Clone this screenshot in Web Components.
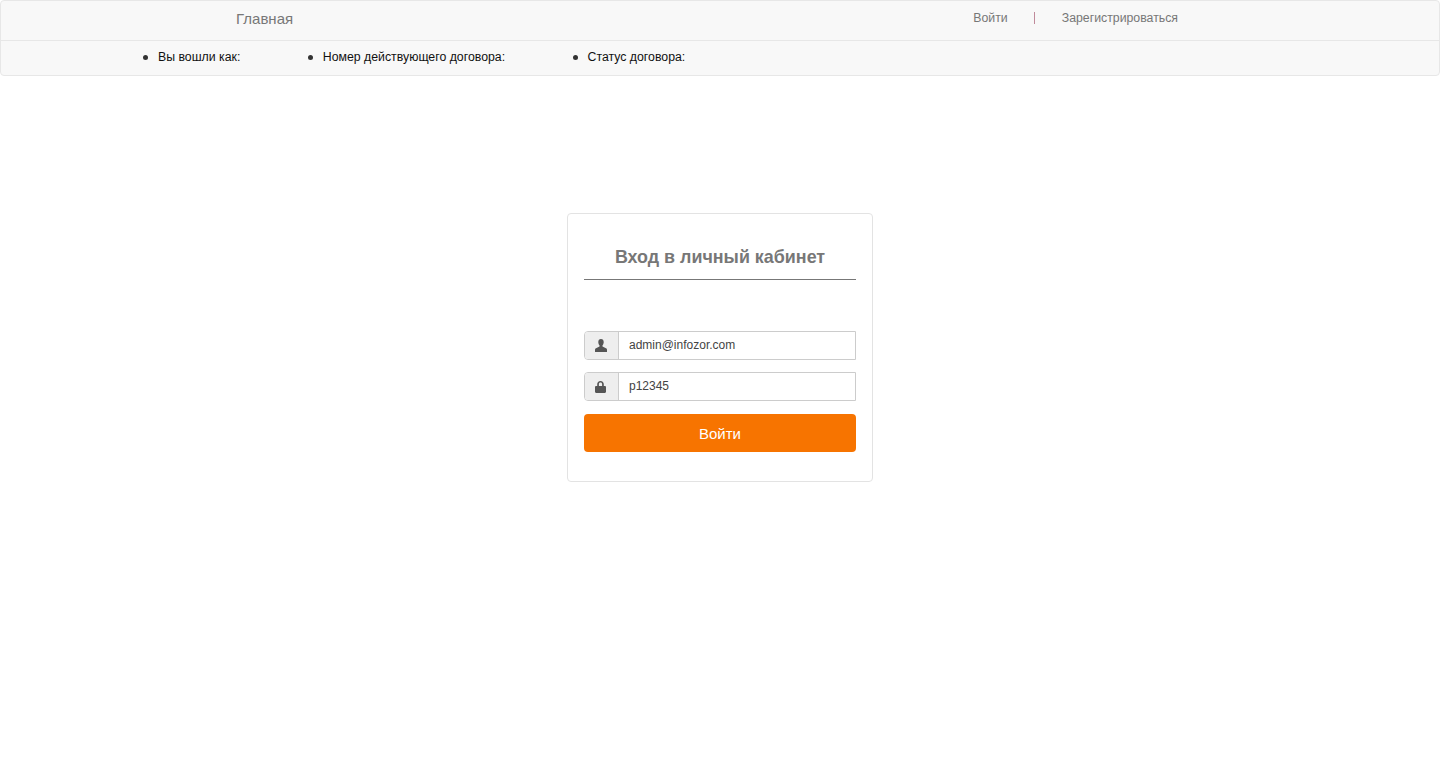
<!DOCTYPE html>
<html lang="ru"><head><meta charset="utf-8"><title>Вход</title>
<style>html,body{margin:0;padding:0;background:#fff;font-family:"Liberation Sans",Arial,sans-serif}</style>
</head><body>
<site-nav></site-nav>
<main-area><login-card></login-card></main-area>
<script>
function def(name, html){
  customElements.define(name, class extends HTMLElement{
    constructor(){super();this.attachShadow({mode:'open'}).innerHTML=html;}
  });
}
def('status-item',`<style>:host{display:block;position:relative;padding-left:15px;font-size:12.3px;line-height:17px;color:#111}
:host::before{content:"";position:absolute;left:0;top:6px;width:5px;height:5px;border-radius:50%;background:#333}</style><slot></slot>`);
def('site-nav',`<style>
:host{display:block;box-sizing:border-box;height:76px;background:#f8f8f8;border:1px solid #e7e7e7;border-radius:4px}
.top{display:flex;align-items:center;height:39px;border-bottom:1px solid #e7e7e7;padding:0 261px 0 235px}
.brand{font-size:15px;color:#777;margin-top:-4px}
.right{margin-left:auto;display:flex;align-items:center;font-size:12.3px;color:#777;margin-top:-6px}
.sep{width:1px;height:12px;background:#c08a9a;margin:0 27px 0 26px}
.status{display:flex;gap:67.5px;padding:8px 0 0 142px}
</style>
<div class="top"><span class="brand">Главная</span><div class="right"><span>Войти</span><span class="sep"></span><span>Зарегистрироваться</span></div></div>
<div class="status"><status-item>Вы вошли как:</status-item><status-item>Номер действующего договора:</status-item><status-item>Статус договора:</status-item></div>`);
def('main-area',`<style>:host{display:flex;justify-content:center;padding-top:137px}</style><slot></slot>`);
def('icon-input',`<style>
:host{display:flex;height:29px;box-sizing:border-box;border:1px solid #ccc;border-radius:4px 0 0 4px;font-size:12px;color:#444;background:#fff}
.addon{width:34px;flex:none;box-sizing:border-box;background:#eee;border-right:1px solid #ccc;border-radius:3px 0 0 3px;display:flex;align-items:center;justify-content:center;padding-right:2px}
.val{padding-left:10px;line-height:26px}
</style><div class="addon"><slot name="icon"></slot></div><div class="val"><slot></slot></div>`);
def('login-card',`<style>
:host{display:block;box-sizing:border-box;width:306px;height:269px;border:1px solid #e3e3e3;border-radius:4px;padding:0 16px;background:#fff}
h2{margin:0;height:66px;box-sizing:border-box;padding-top:33px;font-size:17.9px;line-height:21px;font-weight:bold;color:#777;text-align:center;border-bottom:1px solid #777}
.form{display:flex;flex-direction:column;padding-top:51px}
icon-input+icon-input{margin-top:12px}
button{margin-top:13px;height:38px;border:0;border-radius:4px;background:#f77400;color:#fff;font:15px "Liberation Sans",Arial,sans-serif;padding:0}
</style>
<h2>Вход в личный кабинет</h2>
<div class="form">
<icon-input><svg slot="icon" width="12" height="13" viewBox="0 0 12 13" style="display:block;fill:#555"><path d="M6 0C4.300 0 3.300 1.200 3.300 3c0 1.300.4 2.500 1.200 3.300v1.300L1 9.300C.3 9.600 0 10 0 10.700V13h12v-2.300c0-.7-.3-1.100-1-1.400L7.500 7.600V6.300c.8-.8 1.200-2 1.200-3.300C8.700 1.200 7.700 0 6 0z"/></svg>admin@infozor.com</icon-input>
<icon-input><svg slot="icon" width="11" height="12" viewBox="0 0 11 12" style="display:block;fill:#555"><path d="M5.500 0C3.500 0 2.200 1.300 2.200 3.300V5H1.200C.5 5 0 5.500 0 6.200V10.800C0 11.500.5 12 1.200 12h8.600c.7 0 1.200-.5 1.200-1.200V6.200C11 5.500 10.500 5 9.800 5H8.800V3.300C8.800 1.300 7.500 0 5.500 0zM3.900 5V3.300C3.900 2.200 4.500 1.600 5.500 1.600s1.600.6 1.600 1.700V5z"/></svg>p12345</icon-input>
<button>Войти</button>
</div>`);
</script>
</body></html>
